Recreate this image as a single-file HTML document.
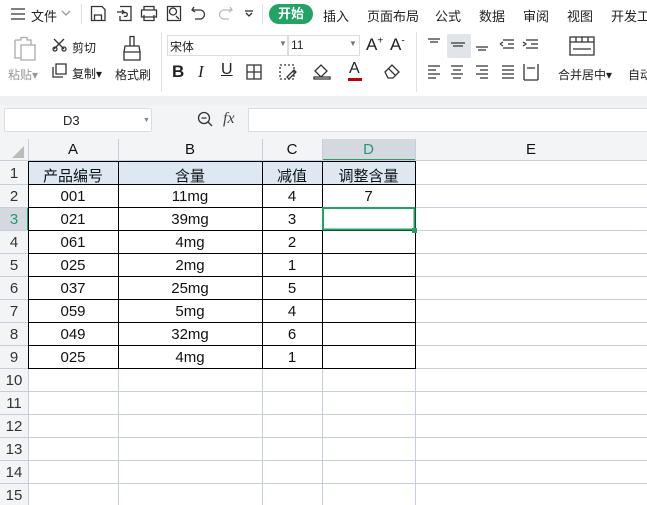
<!DOCTYPE html><html><head><meta charset="utf-8"><style>
*{margin:0;padding:0;box-sizing:border-box}
body{width:647px;height:505px;overflow:hidden;background:#fff;font-family:"Liberation Sans","Noto Sans CJK SC",sans-serif;position:relative;color:#222}
.a{position:absolute}
.t{position:absolute;font-size:13px;white-space:nowrap}
.c{position:absolute;font-size:15px;text-align:center;color:#111;top:0;padding-top:2px}
.h{position:absolute;background:#c6cede;height:1px}
.v{position:absolute;background:#c6cede;width:1px}
.rn{position:absolute;left:0;width:28px;font-size:15px;text-align:center;color:#333;padding-top:2px}
.ic{position:absolute;stroke:#333;fill:none;stroke-width:1.3}
</style></head><body>
<div class="a" style="left:0;top:0;width:647px;height:28px;background:#fff"></div>
<svg class="ic" style="left:10px;top:7px" width="16" height="14"><path d="M1 2H15M1 7H15M1 12H15"/></svg>
<div class="t" style="left:31px;top:6px">文件</div>
<svg class="ic" style="left:61px;top:9px;stroke:#999" width="10" height="8"><path d="M1 2L5 6L9 2"/></svg>
<div class="a" style="left:81px;top:4px;width:1px;height:20px;background:#ddd"></div>
<svg class="ic" style="left:90px;top:5px" width="16" height="17"><path d="M1.5 1.5H12L15 4.5V15.5H1.5Z M4.5 15.5V10H11.5V15.5"/></svg>
<svg class="ic" style="left:116px;top:5px" width="16" height="17"><path d="M4 1.5H15V15.5H4V11 M1 7H8M6 5L8 7L6 9 M8 11A2 2 0 1 0 8 8"/></svg>
<svg class="ic" style="left:140px;top:5px" width="18" height="17"><path d="M4 5V1.5H14V5 M1.5 5H16.5V12H1.5Z M4 10V15.5H14V10"/></svg>
<svg class="ic" style="left:166px;top:5px" width="16" height="17"><path d="M1.5 1.5H14.5V15.5H1.5Z M10 11L13 14 M7 6.5m-3.5 0a3.5 3.5 0 1 0 7 0a3.5 3.5 0 1 0-7 0"/></svg>
<svg class="ic" style="left:191px;top:6px" width="15" height="15"><path d="M3 1L1 4L4 6 M1.5 4H9A4.5 4.5 0 0 1 9 13H4"/></svg>
<svg class="ic" style="left:218px;top:6px;stroke:#bbb" width="15" height="15"><path d="M12 1L14 4L11 6 M13.5 4H6A4.5 4.5 0 0 0 6 13H11"/></svg>
<svg class="ic" style="left:244px;top:10px" width="10" height="8"><path d="M1 1H9M2 3L5 6L8 3"/></svg>
<div class="a" style="left:262px;top:4px;width:1px;height:20px;background:#ddd"></div>
<div class="a" style="left:269px;top:4px;width:44px;height:20px;border-radius:10px;background:#21a366;color:#fff;font-size:13px;text-align:center;line-height:20px;font-weight:bold">开始</div>
<div class="t" style="left:323px;top:6px">插入</div>
<div class="t" style="left:367px;top:6px">页面布局</div>
<div class="t" style="left:435px;top:6px">公式</div>
<div class="t" style="left:479px;top:6px">数据</div>
<div class="t" style="left:523px;top:6px">审阅</div>
<div class="t" style="left:567px;top:6px">视图</div>
<div class="t" style="left:611px;top:6px">开发工</div>
<svg class="ic" style="left:13px;top:36px;stroke:#aaa" width="24" height="26"><path d="M2 4H8V1.5H14V4H18V9 M2 4V22H8 M8 9H22V24H8Z"/></svg>
<div class="t" style="left:8px;top:66px;color:#999;font-size:12px">粘贴▾</div>
<svg class="ic" style="left:52px;top:38px" width="16" height="14"><path d="M2 1L12 11M12 1L2 11"/><circle cx="3" cy="11" r="2"/><circle cx="12" cy="11" r="2"/></svg>
<div class="t" style="left:72px;top:39px;font-size:12px">剪切</div>
<svg class="ic" style="left:52px;top:63px" width="16" height="16"><path d="M4 1H14V11H4Z M1 4V14H11"/></svg>
<div class="t" style="left:72px;top:65px;font-size:12px">复制▾</div>
<svg class="ic" style="left:121px;top:35px" width="22" height="28"><path d="M9 1.5H13V11H9Z M4 11H18L19 17H3Z M3 17H19V25H3Z"/></svg>
<div class="t" style="left:115px;top:66px;font-size:12px">格式刷</div>
<div class="a" style="left:161px;top:32px;width:1px;height:60px;background:#e2e2e2"></div>
<div class="a" style="left:167px;top:35px;width:121px;height:21px;border:1px solid #ddd"></div>
<div class="t" style="left:170px;top:38px;font-size:12px">宋体</div>
<div class="t" style="left:279px;top:39px;font-size:8px;color:#777">▼</div>
<div class="a" style="left:288px;top:35px;width:72px;height:21px;border:1px solid #ddd"></div>
<div class="t" style="left:291px;top:38px;font-size:12px">11</div>
<div class="t" style="left:349px;top:39px;font-size:8px;color:#777">▼</div>
<div class="t" style="left:366px;top:35px;font-size:17px">A<sup style="font-size:10px">+</sup></div>
<div class="t" style="left:390px;top:35px;font-size:17px">A<sup style="font-size:10px">-</sup></div>
<div class="t" style="left:172px;top:62px;font-size:17px;font-weight:bold">B</div>
<div class="t" style="left:198px;top:62px;font-size:17px;font-style:italic;font-family:'Liberation Serif',serif">I</div>
<div class="t" style="left:221px;top:61px;font-size:16px;text-decoration:underline">U</div>
<svg class="ic" style="left:246px;top:64px" width="16" height="16"><path d="M1 1H15V15H1Z M8 1V15M1 8H15"/></svg>
<svg class="ic" style="left:279px;top:64px" width="18" height="16"><path d="M1 1H15V15H1Z" stroke-dasharray="2 2"/><path d="M8 13L15 6L17 8L10 15Z"/></svg>
<svg class="ic" style="left:313px;top:63px" width="18" height="17"><path d="M2 8L8 2L14 8L8 14Z M1 14H17V16H1Z"/></svg>
<div class="t" style="left:349px;top:60px;font-size:16px">A</div>
<div class="a" style="left:348px;top:78px;width:14px;height:3px;background:#c00000"></div>
<svg class="ic" style="left:383px;top:63px" width="18" height="16"><path d="M2 9L9 2L16 9L10 15H5Z M6 6L12 12"/></svg>
<div class="a" style="left:416px;top:32px;width:1px;height:60px;background:#e2e2e2"></div>
<div class="a" style="left:447px;top:34px;width:24px;height:24px;background:#e1e4e8;border-radius:2px"></div>
<svg class="ic" style="left:426px;top:36px" width="220" height="50"><path d="M2 3H14M4 6H12 M25 7H39M27 10H37 M50 11H62M52 14H60 M77 4H88M82 8H88M77 12H88M74 8L77 6M74 8L77 10 M100 4H112M105 8H112M100 12H112M97 6L100 8L97 10 M2 30H14M2 34H10M2 38H14M2 42H10 M25 30H37M27 34H35M25 38H37M27 42H35 M50 30H62M54 34H62M50 38H62M54 42H62 M76 30H88M76 34H88M76 38H88M76 42H88 M98 28V44M112 28V44M98 44H112M101 32H109"/><path d="M144 1H168V19H144Z M144 6H168 M150 1V6M156 1V6M162 1V6 M147 13H165"/></svg>
<div class="t" style="left:558px;top:66px;font-size:12px">合并居中▾</div>
<div class="t" style="left:628px;top:66px;font-size:12px">自动</div>
<div class="a" style="left:0;top:96px;width:647px;height:9px;background:#eef0f2"></div>
<div class="a" style="left:0;top:105px;width:647px;height:34px;background:#f3f4f6"></div>
<div class="a" style="left:4px;top:108px;width:148px;height:24px;background:#fff;border:1px solid #ddd;border-radius:2px"></div>
<div class="t" style="left:63px;top:113px">D3</div>
<div class="t" style="left:143px;top:117px;font-size:7px;color:#888">▼</div>
<svg class="ic" style="left:197px;top:111px" width="18" height="18"><circle cx="7" cy="7" r="5.5"/><path d="M4.5 7H9.5M11 11L15 15"/></svg>
<div class="t" style="left:223px;top:110px;font-size:16px;font-style:italic;font-family:'Liberation Serif',serif;color:#444">fx</div>
<div class="a" style="left:248px;top:108px;width:400px;height:24px;background:#fff;border:1px solid #ddd"></div>
<div class="a" style="left:0;top:139px;width:647px;height:22px;background:#f3f4f6"></div>
<div class="a" style="left:322px;top:139px;width:93px;height:22px;background:#d5d9df"></div>
<div class="a" style="left:0;top:161px;width:28px;height:344px;background:#f3f4f6"></div>
<div class="a" style="left:0;top:207px;width:28px;height:23px;background:#d5d9df"></div>
<svg class="a" style="left:12px;top:146px" width="12" height="12"><path d="M12 0V12H0Z" fill="#bbb"/></svg>
<div class="c" style="left:28px;top:139px;width:90px">A</div>
<div class="c" style="left:118px;top:139px;width:144px">B</div>
<div class="c" style="left:262px;top:139px;width:60px">C</div>
<div class="c" style="left:322px;top:139px;width:93px;color:#1a9e6e">D</div>
<div class="c" style="left:415px;top:139px;width:232px">E</div>
<div class="a" style="left:322px;top:159px;width:93px;height:2px;background:#21a366"></div>
<div class="a" style="left:27px;top:207px;width:2px;height:23px;background:#21a366"></div>
<div class="a" style="left:28px;top:161px;width:387px;height:23px;background:#dde8f3"></div>
<div class="v" style="left:28px;top:139px;height:366px"></div>
<div class="v" style="left:118px;top:139px;height:366px"></div>
<div class="v" style="left:262px;top:139px;height:366px"></div>
<div class="v" style="left:322px;top:139px;height:366px"></div>
<div class="v" style="left:415px;top:139px;height:366px"></div>
<div class="h" style="left:0;top:160px;width:647px"></div>
<div class="h" style="left:0;top:184px;width:647px"></div>
<div class="h" style="left:0;top:207px;width:647px"></div>
<div class="h" style="left:0;top:230px;width:647px"></div>
<div class="h" style="left:0;top:253px;width:647px"></div>
<div class="h" style="left:0;top:276px;width:647px"></div>
<div class="h" style="left:0;top:299px;width:647px"></div>
<div class="h" style="left:0;top:322px;width:647px"></div>
<div class="h" style="left:0;top:345px;width:647px"></div>
<div class="h" style="left:0;top:368px;width:647px"></div>
<div class="h" style="left:0;top:391px;width:647px"></div>
<div class="h" style="left:0;top:414px;width:647px"></div>
<div class="h" style="left:0;top:437px;width:647px"></div>
<div class="h" style="left:0;top:460px;width:647px"></div>
<div class="h" style="left:0;top:483px;width:647px"></div>
<svg class="a" style="left:0;top:0" width="647" height="505"><g stroke="#000" stroke-width="1" fill="none">
<path d="M28.5 161V369 M118.5 161V369 M262.5 161V369 M322.5 161V369 M415.5 161V369"/>
<path d="M28 161.5H416 M28 184.5H416 M28 207.5H416 M28 230.5H416 M28 253.5H416 M28 276.5H416 M28 299.5H416 M28 322.5H416 M28 345.5H416 M28 368.5H416"/>
</g>
<rect x="323" y="208" width="91.5" height="21.5" fill="none" stroke="#21a366" stroke-width="2"/>
<rect x="412" y="228" width="5" height="5" fill="#21a366"/></svg>
<div class="rn" style="top:163px">1</div><div class="rn" style="top:186px">2</div><div class="rn" style="top:209px;color:#1a9e6e">3</div><div class="rn" style="top:232px">4</div><div class="rn" style="top:255px">5</div><div class="rn" style="top:278px">6</div><div class="rn" style="top:301px">7</div><div class="rn" style="top:324px">8</div><div class="rn" style="top:347px">9</div><div class="rn" style="top:370px">10</div><div class="rn" style="top:393px">11</div><div class="rn" style="top:416px">12</div><div class="rn" style="top:439px">13</div><div class="rn" style="top:462px">14</div><div class="rn" style="top:485px">15</div>
<div class="c" style="left:28px;top:163px;width:90px">产品编号</div><div class="c" style="left:118px;top:163px;width:144px">含量</div><div class="c" style="left:262px;top:163px;width:60px">减值</div><div class="c" style="left:322px;top:163px;width:93px">调整含量</div>
<div class="c" style="left:28px;top:186px;width:90px">001</div><div class="c" style="left:118px;top:186px;width:144px">11mg</div><div class="c" style="left:262px;top:186px;width:60px">4</div><div class="c" style="left:322px;top:186px;width:93px">7</div>
<div class="c" style="left:28px;top:209px;width:90px">021</div><div class="c" style="left:118px;top:209px;width:144px">39mg</div><div class="c" style="left:262px;top:209px;width:60px">3</div>
<div class="c" style="left:28px;top:232px;width:90px">061</div><div class="c" style="left:118px;top:232px;width:144px">4mg</div><div class="c" style="left:262px;top:232px;width:60px">2</div>
<div class="c" style="left:28px;top:255px;width:90px">025</div><div class="c" style="left:118px;top:255px;width:144px">2mg</div><div class="c" style="left:262px;top:255px;width:60px">1</div>
<div class="c" style="left:28px;top:278px;width:90px">037</div><div class="c" style="left:118px;top:278px;width:144px">25mg</div><div class="c" style="left:262px;top:278px;width:60px">5</div>
<div class="c" style="left:28px;top:301px;width:90px">059</div><div class="c" style="left:118px;top:301px;width:144px">5mg</div><div class="c" style="left:262px;top:301px;width:60px">4</div>
<div class="c" style="left:28px;top:324px;width:90px">049</div><div class="c" style="left:118px;top:324px;width:144px">32mg</div><div class="c" style="left:262px;top:324px;width:60px">6</div>
<div class="c" style="left:28px;top:347px;width:90px">025</div><div class="c" style="left:118px;top:347px;width:144px">4mg</div><div class="c" style="left:262px;top:347px;width:60px">1</div>
</body></html>
